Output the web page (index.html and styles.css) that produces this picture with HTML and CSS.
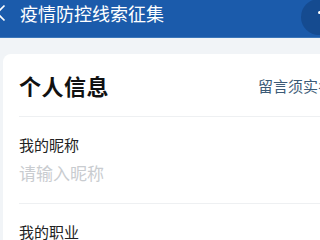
FILE: index.html
```html
<!DOCTYPE html>
<html>
<head>
<meta charset="utf-8">
<link rel="stylesheet" href="styles.css">
</head>
<body>
<div class="header">
  <svg class="back" width="10" height="18" viewBox="0 0 10 18"><path d="M7.5 1.5 L0 9 L7.5 16.5" fill="none" stroke="#fff" stroke-width="1.6"/></svg>
  <span class="title">疫情防控线索征集</span>
  <div class="menu"><span class="dot"></span></div>
</div>
<div class="gap"></div>
<div class="card">
  <div class="card-head">
    <span class="h1">个人信息</span>
    <span class="note">留言须实名</span>
  </div>
  <div class="field">
    <div class="label">我的昵称</div>
    <div class="placeholder">请输入昵称</div>
  </div>
  <div class="field">
    <div class="label">我的职业</div>
  </div>
</div>
</body>
</html>
```
FILE: styles.css
```css
html, body { margin: 0; padding: 0; }
body {
  width: 320px; height: 240px; overflow: hidden;
  background: #f1f4f7;
  font-family: "Noto Sans CJK SC", "Noto Sans", sans-serif;
}
.header {
  height: 37px; background: #1b5bab;
  display: flex; align-items: center;
  position: relative; overflow: hidden;
  border-bottom: 1px solid #3b76b9;
}
.back { margin-left: -3px; margin-top: -12px; }
.title {
  color: #fff; font-size: 18px; margin-left: 13px; margin-top: -11px;
  letter-spacing: 0px;
}
.menu {
  position: absolute; left: 301px; top: -1px;
  width: 36px; height: 36px; border-radius: 50%;
  background: #154b90;
}
.dot { position: absolute; left: 17px; top: 12px; width: 3px; height: 3px; border-radius: 50%; background: #fff; }
.gap { height: 16px; }
.card {
  background: #fff; margin: 0 0 0 3px; border-radius: 8px 0 0 0;
  padding-left: 16px; height: 187px; overflow: hidden;
}
.card-head {
  height: 62px; display: grid; grid-template-columns: 239px 1fr; align-items: center;
  border-bottom: 1px solid #eef0f2;
}
.h1 { font-size: 22px; font-weight: 700; color: #111; letter-spacing: 0.5px; }
.note { font-size: 15px; color: #3c5a76; white-space: nowrap; }
.field { border-bottom: 1px solid #eef0f2; padding-top: 18px; height: 68px; }
.label { font-size: 15px; color: #222; line-height: 20px; }
.placeholder { font-size: 17px; color: #c9ccd0; line-height: 22px; margin-top: 7px; }
```
